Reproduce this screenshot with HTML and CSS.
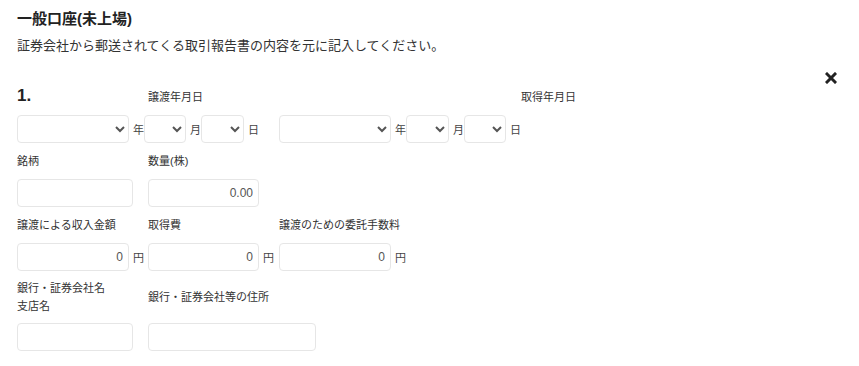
FILE: index.html
```html
<!DOCTYPE html>
<html lang="ja">
<head>
<meta charset="utf-8">
<title>一般口座(未上場)</title>
<link rel="stylesheet" href="styles.css">
</head>
<body>
<div class="page">
  <h2 class="title">一般口座(未上場)</h2>
  <p class="desc">証券会社から郵送されてくる取引報告書の内容を元に記入してください。</p>

  <div class="item">
    <button class="remove" type="button" aria-label="削除">
      <svg width="12" height="12" viewBox="0 0 12 12"><path d="M2 2 L10 10 M10 2 L2 10" stroke="#222" stroke-width="3" stroke-linecap="square"/></svg>
    </button>

    <div class="head">
      <span class="num">1.</span>
      <span class="lbl">譲渡年月日</span>
      <span class="lbl">取得年月日</span>
    </div>

    <div class="dates">
      <div class="dgroup">
        <select class="sel sel-y"><option></option></select><span class="unit">年</span>
        <select class="sel sel-m"><option></option></select><span class="unit">月</span>
        <select class="sel sel-d"><option></option></select><span class="unit">日</span>
      </div>
      <div class="dgroup">
        <select class="sel sel-y"><option></option></select><span class="unit">年</span>
        <select class="sel sel-m2"><option></option></select><span class="unit">月</span>
        <select class="sel sel-d2"><option></option></select><span class="unit">日</span>
      </div>
    </div>

    <div class="grid">
      <div class="lbl cell">銘柄</div>
      <div class="lbl cell">数量(株)</div>
      <div class="cell"></div>

      <div class="fcell"><input class="inp w116" type="text"></div>
      <div class="fcell"><input class="inp w111 num-r" type="text" value="0.00"></div>
      <div class="fcell"></div>

      <div class="lbl cell">譲渡による収入金額</div>
      <div class="lbl cell">取得費</div>
      <div class="lbl cell wide">譲渡のための委託手数料</div>

      <div class="fcell"><input class="inp w112 num-r" type="text" value="0"><span class="unit">円</span></div>
      <div class="fcell"><input class="inp w111 num-r" type="text" value="0"><span class="unit">円</span></div>
      <div class="fcell"><input class="inp w112 num-r" type="text" value="0"><span class="unit">円</span></div>

      <div class="lbl cell">銀行・証券会社名<br>支店名</div>
      <div class="lbl cell wide">銀行・証券会社等の住所</div>
      <div class="cell"></div>

      <div class="fcell"><input class="inp w116" type="text"></div>
      <div class="fcell span2"><input class="inp w168" type="text"></div>
    </div>
  </div>
</div>
</body>
</html>
```

FILE: styles.css
```css
html, body {
  margin: 0;
  padding: 0;
  background: #fff;
}
body {
  font-family: "Liberation Sans", "Noto Sans CJK JP", sans-serif;
  color: #333;
}
.page {
  padding: 0 17px;
}
.title {
  margin: 9px 0 0;
  font-size: 15px;
  line-height: 20px;
  font-weight: bold;
  color: #222;
}
.desc {
  margin: 7px 0 0;
  font-size: 13px;
  line-height: 20px;
  color: #333;
}
.item {
  position: relative;
  padding-top: 30px;
}
.remove {
  position: absolute;
  top: 16px;
  right: 5px;
  padding: 0;
  margin: 0;
  border: 0;
  background: none;
  width: 12px;
  height: 12px;
  display: block;
}
.remove svg {
  display: block;
}
.head {
  display: grid;
  grid-template-columns: 131px 373px auto;
  align-items: center;
  height: 20px;
}
.num {
  font-size: 17px;
  font-weight: bold;
  color: #222;
}
.lbl {
  font-size: 11px;
  color: #333;
}
.dates {
  margin-top: 9px;
  display: flex;
  align-items: center;
}
.dgroup {
  display: flex;
  align-items: center;
}
.dgroup + .dgroup {
  margin-left: 20px;
}
.sel {
  height: 28px;
  margin: 0;
  border: 1px solid #e6e6e6;
  border-radius: 4px;
  background: #fff;
  box-sizing: border-box;
  font-size: 12px;
  color: #555;
}
.sel-y { width: 112px; }
.sel-m { width: 42px; }
.sel-d { width: 43px; }
.sel-m2 { width: 43px; }
.sel-d2 { width: 42px; }
.unit {
  font-size: 11px;
  color: #444;
  margin-left: 4px;
  width: 11px;
  flex: none;
}
.grid {
  display: grid;
  grid-template-columns: 131px 131px 200px;
}
.cell {
  box-sizing: border-box;
  min-height: 36px;
  padding: 8px 0;
  line-height: 18px;
  display: flex;
  align-items: center;
  white-space: nowrap;
}
.fcell {
  display: flex;
  align-items: center;
  height: 28px;
}
.span2 {
  grid-column: span 2;
}
.inp {
  height: 28px;
  box-sizing: border-box;
  margin: 0;
  border: 1px solid #e6e6e6;
  border-radius: 4px;
  padding: 0 5px;
  font-family: "Liberation Sans", sans-serif;
  font-size: 12px;
  color: #555;
  background: #fff;
  outline: none;
}
.num-r { text-align: right; }
.w111 { width: 111px; }
.w112 { width: 112px; }
.w116 { width: 116px; }
.w168 { width: 168px; }
```
